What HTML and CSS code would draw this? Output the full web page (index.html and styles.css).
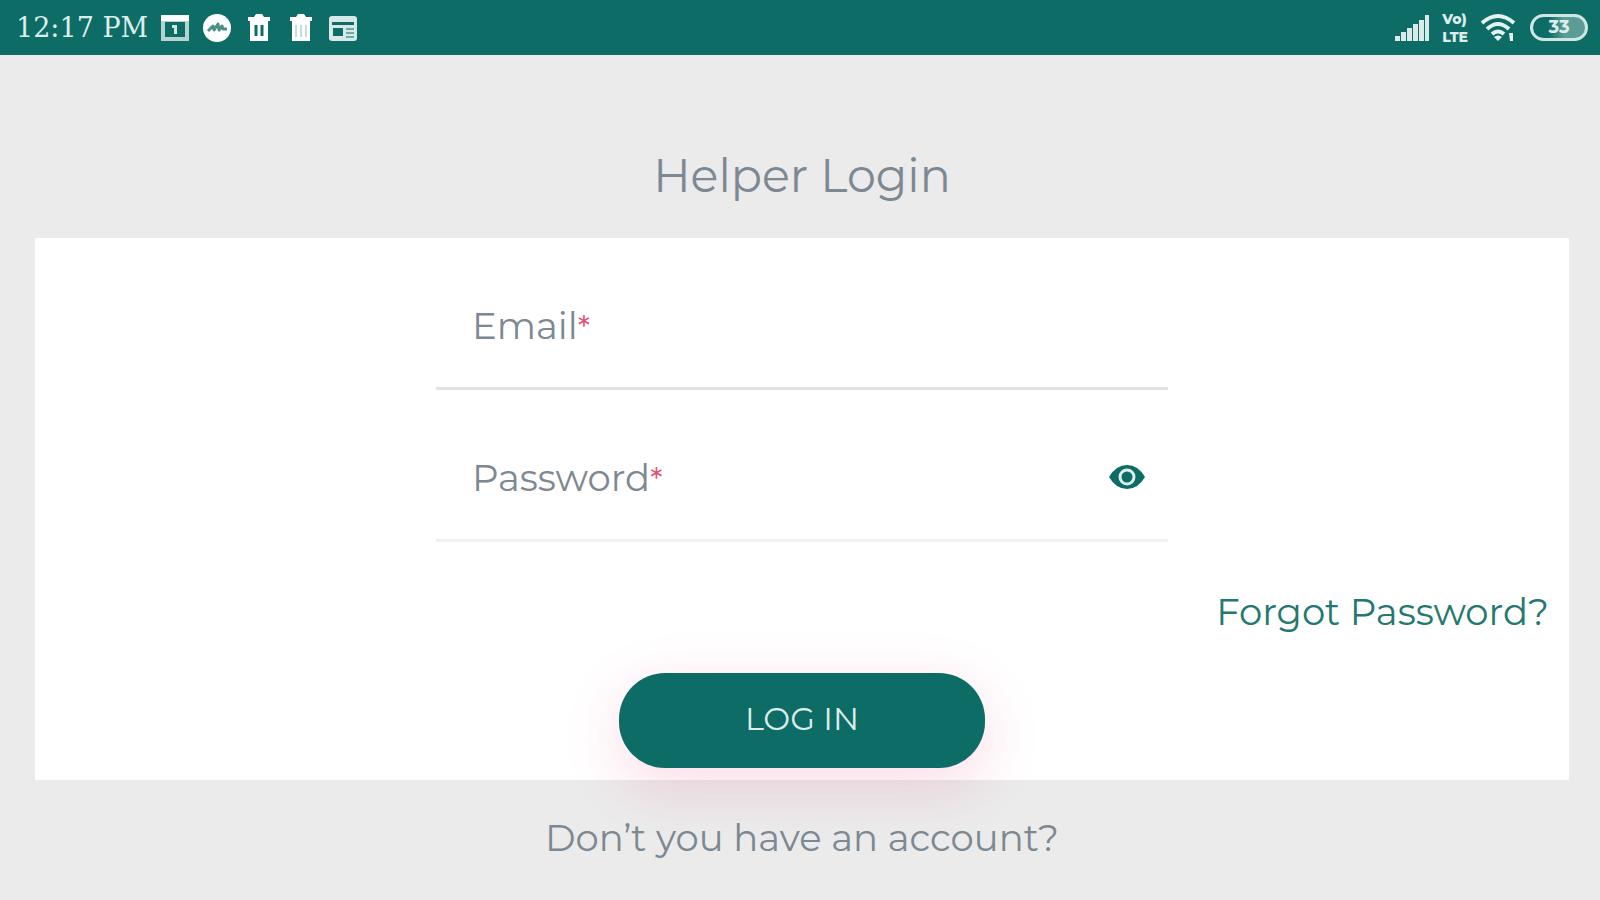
FILE: index.html
```html
<!DOCTYPE html>
<html lang="en">
<head>
    <meta charset="UTF-8" />
    <meta name="viewport" content="width=device-width, initial-scale=1.0"/>
    <title>Helper Login</title>
    <link rel="stylesheet" href="styles.css">
</head>
<body>
    <header class="status-bar">
        <div class="status-left">
            <span class="clock">12:17 PM</span>
            <svg class="icon" viewBox="0 0 30 30" aria-hidden="true">
                <path d="M1 2h28v26H1z" fill="#b4d3cf"/>
                <path d="M1 2h28v6H1z" fill="#fff"/>
                <path d="M5 9h20v15H5z" fill="#0d6c66"/>
                <path d="M12 12h5v9h-3v-6h-2z" fill="#cfe6e3"/>
            </svg>
            <svg class="icon" viewBox="0 0 30 30" aria-hidden="true">
                <circle cx="15" cy="15" r="14" fill="#fff"/>
                <path d="M6 18l5-5 1 4 4-6 1 6 3-4 1 3h4" fill="none" stroke="#4c8f89" stroke-width="3" stroke-linejoin="round"/>
            </svg>
            <svg class="icon" viewBox="0 0 30 30" aria-hidden="true">
                <path d="M4 4h6l2-3h6l2 3h6v4H4zM6 8h18v20H6z" fill="#fff"/>
                <path d="M12 12v11M18 12v11" stroke="#0d6c66" stroke-width="3"/>
            </svg>
            <svg class="icon" viewBox="0 0 30 30" aria-hidden="true">
                <path d="M4 4h6l2-3h6l2 3h6v4H4zM6 8h18v20H6z" fill="#fff"/>
                <path d="M10 12v12M15 12v12M20 12v12" stroke="#c3deda" stroke-width="2"/>
            </svg>
            <svg class="icon" viewBox="0 0 30 30" aria-hidden="true">
                <rect x="1" y="3" width="28" height="25" rx="3" fill="#d6e9e6"/>
                <path d="M4 9h22v3H4zM5 15h10v8H5z" fill="#0d6c66"/>
                <path d="M18 16h8M18 20h8M18 24h8" stroke="#71aaa4" stroke-width="2"/>
            </svg>
        </div>
        <div class="status-right">
            <svg class="signal" viewBox="0 0 36 28" aria-hidden="true">
                <path d="M1 27v-5h5v5zM7 27v-9h5v9zM13 27V14h5v13zM19 27v-17h5v17zM25 27V6h5v21zM31 27V1h4v26z" fill="#d8ebe8"/>
            </svg>
            <span class="volte"><span>Vo)</span><span>LTE</span></span>
            <svg class="wifi" viewBox="0 0 38 30" aria-hidden="true">
                <path d="M2 10q16-14 32 0M7 16q11-10 22 0M12 21q6-5 12 0" fill="none" stroke="#e4f2f0" stroke-width="4"/>
                <path d="M14 24q4-3 8 0l-4 4zM29 20l4 0v8h-3z" fill="#e4f2f0"/>
            </svg>
            <span class="battery">33</span>
        </div>
    </header>
    <main>
        <h1>Helper Login</h1>
        <form class="card">
            <div class="field">
                <label for="email">Email<span class="required">*</span></label>
                <input type="email" id="email" required>
            </div>
            <div class="field">
                <label for="password">Password<span class="required">*</span></label>
                <input type="password" id="password" required>
                <button type="button" class="toggle" aria-label="Show password">
                    <svg viewBox="0 0 38 26" aria-hidden="true">
                        <path d="M1 13Q8 1 19 1t18 12Q30 25 19 25T1 13z" fill="#0d6c66"/>
                        <circle cx="19" cy="13" r="7" fill="#0d6c66" stroke="#dcefec" stroke-width="3"/>
                    </svg>
                </button>
            </div>
            <a class="forgot" href="#">Forgot Password?</a>
            <button type="submit" class="login">LOG IN</button>
        </form>
        <p class="signup">Don’t you have an account?</p>
    </main>
</body>
</html>
```

FILE: styles.css
```css
* {
    box-sizing: border-box;
}

body {
    font-family: Montserrat, Inter, sans-serif;
    font-size: 37px;
    line-height: 44px;
    margin: 0;
    color: #7d8992;
    background-color: #ebebeb;
}

.status-bar {
    display: flex;
    align-items: center;
    justify-content: space-between;
    height: 55px;
    padding: 0 12px 0 16px;
    color: #dcedeb;
    background-color: #0d6c66;
}

.status-left,
.status-right {
    display: flex;
    align-items: center;
    gap: 12px;
}

.clock {
    font-family: "DejaVu Serif", serif;
    font-size: 27px;
}

.icon {
    width: 30px;
    height: 30px;
}

.signal {
    width: 36px;
    height: 28px;
}

.volte {
    display: flex;
    flex-direction: column;
    font-size: 14px;
    font-weight: 800;
    line-height: 18px;
}

.wifi {
    width: 38px;
    height: 30px;
}

.battery {
    width: 58px;
    border: 3px solid #cfe6e3;
    border-radius: 14px;
    font-size: 18px;
    font-weight: 700;
    line-height: 21px;
    text-align: center;
    background-image: linear-gradient(to right, #0d6c66 30%, #5b9c96 60%);
}

main {
    display: flex;
    flex-direction: column;
    padding: 91px 31px 0 35px;
}

h1 {
    margin: 0 0 32px;
    font-size: 46px;
    font-weight: 400;
    line-height: 60px;
    text-align: center;
}

.card {
    display: flex;
    flex-direction: column;
    align-items: center;
    padding: 0 20px 12px;
    background-color: #ffffff;
}

.field {
    display: flex;
    align-items: center;
    width: 49%;
    height: 152px;
    padding: 28px 22px 0 36px;
    border-bottom: 3px solid #e2e2e2;
}

.field + .field {
    border-bottom-color: #f1f1f1;
}

.required {
    font-size: 32px;
    color: #e84a72;
}

input {
    flex: 1;
    min-width: 0;
    padding: 8px;
    border: none;
    outline: none;
    font: inherit;
    color: inherit;
    background: none;
}

.toggle {
    display: flex;
    padding: 0 0 4px;
    border: none;
    background: none;
    cursor: pointer;
}

.toggle svg {
    width: 38px;
    height: 26px;
}

.forgot {
    align-self: flex-end;
    margin: 48px 0 39px;
    color: #23786f;
    text-decoration: none;
}

.login {
    width: 366px;
    height: 95px;
    padding: 0 0 4px;
    border: none;
    border-radius: 46px;
    font: inherit;
    font-size: 32px;
    color: #dcedeb;
    background-color: #0d6c66;
    box-shadow: 0 16px 60px rgba(233, 30, 99, 0.16);
    cursor: pointer;
}

.signup {
    margin: 36px 0 0;
    text-align: center;
}
```
